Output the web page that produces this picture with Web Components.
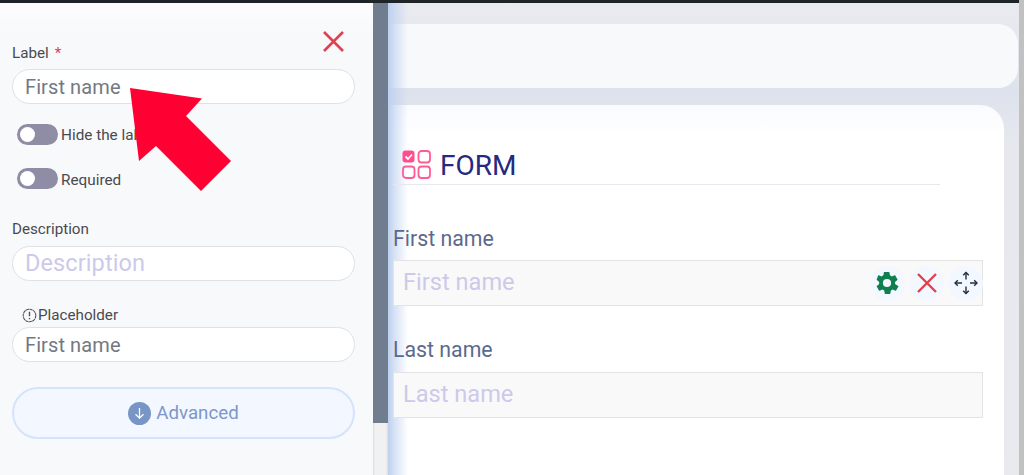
<!DOCTYPE html>
<html>
<head>
<meta charset="utf-8">
<title>Form builder</title>
<style>
html, body { margin: 0; padding: 0; height: 100%; overflow: hidden; }
body { font-family: 'Roboto', 'Liberation Sans', sans-serif; }
</style>
</head>
<body>
<form-app>
  <side-panel slot="panel">
    <pill-input label="Label" required value="First name" tone="value"></pill-input>
    <toggle-row>Hide the label</toggle-row>
    <toggle-row class="second">Required</toggle-row>
    <pill-input label="Description" value="Description" tone="hint" class="description"></pill-input>
    <pill-input label="Placeholder" info value="First name" tone="value" class="placeholder"></pill-input>
    <advanced-button>Advanced</advanced-button>
  </side-panel>
  <form-canvas slot="canvas">
    <form-field label="First name" hint="First name" tools></form-field>
    <form-field label="Last name" hint="Last name" class="last"></form-field>
  </form-canvas>
</form-app>

<script>
class FormApp extends HTMLElement {
    constructor() {
        super();
        this.attachShadow({mode: 'open'});
        this.shadowRoot.innerHTML = `
<style>
:host { display: flex; flex-direction: column; width: 1024px; height: 475px; position: relative; overflow: hidden; }
.topbar { height: 3px; flex: none; background: #1f2428; margin-right: 5px; }
.top-right { position: absolute; top: 0; right: 0; width: 5px; height: 3px; background: #c1c1c1; }
.body { flex: 1; display: flex; min-height: 0; }
.track { width: 15px; flex: none; background: linear-gradient(90deg, #dcdcdc, #f1f1f1 15%, #f1f1f1 85%, #dcdcdc); }
.thumb { height: 420px; background: #6f7d8f; }
.main { flex: 1; min-width: 0; display: flex; }
.page-scroll { width: 5px; flex: none; background: #c1c1c1; }
.arrow { position: absolute; left: 0; top: 0; pointer-events: none; }
</style>
<div class="topbar"></div>
<div class="top-right"></div>
<div class="body">
  <slot name="panel"></slot>
  <div class="track"><div class="thumb"></div></div>
  <div class="main"><slot name="canvas"></slot></div>
  <div class="page-scroll"></div>
</div>
<svg class="arrow" width="240" height="200" viewBox="0 0 240 200"><polygon points="130,88 202,98.500 186,116 231,161 201,191 156,146 139,161" fill="#ff0033"/></svg>`;
    }
}

class SidePanel extends HTMLElement {
    constructor() {
        super();
        this.attachShadow({mode: 'open'});
        this.shadowRoot.innerHTML = `
<style>
:host { display: block; width: 373px; flex: none; box-sizing: border-box; padding: 42px 18px 0 12px; position: relative;
  background: linear-gradient(180deg, #fdfdfe 0, #f8f9fb 26px, #f8f9fb 100%); }
.close { position: absolute; left: 322px; top: 27px; width: 23px; height: 23px; }
</style>
<svg class="close" viewBox="0 0 23 23"><path d="M2 2 L21 21 M21 2 L2 21" stroke="#e0404f" stroke-width="2.600" fill="none"/></svg>
<slot></slot>`;
    }
}

class PillInput extends HTMLElement {
    constructor() {
        super();
        this.attachShadow({mode: 'open'});
        const req = this.hasAttribute('required') ? '<span class="req">*</span>' : '';
        const info = this.hasAttribute('info')
            ? '<svg class="info" width="15" height="15" viewBox="0 0 15 15"><circle cx="7.500" cy="7.500" r="6.300" fill="none" stroke="#555" stroke-width="1.100" stroke-dasharray="3.200 .4"/><path d="M7.500 3.800v4.500M7.500 10v1.200" stroke="#555" stroke-width="1.400" fill="none"/></svg>'
            : '';
        this.shadowRoot.innerHTML = `
<style>
:host { display: block; }
:host(.description) { margin-top: 32px; }
:host(.placeholder) { margin-top: 26px; }
.label { display: flex; align-items: center; height: 16px; font-size: 15.200px; color: #4a4a4f; margin-bottom: 8px; white-space: pre; }
:host(.description) .label { margin-bottom: 9px; }
:host(.placeholder) .label { padding-left: 10px; margin-bottom: 4px; }
.req { color: #e0404f; margin-left: 6px; }
.info { margin-right: 1px; }
.box { box-sizing: border-box; height: 35px; border: 1px solid #e0e0e8; border-radius: 18px; background: #fff;
  padding: 0 12px; font-size: 20px; line-height: 35px; letter-spacing: .1px; white-space: nowrap; }
:host([tone="value"]) .box { color: #727982; }
:host([tone="hint"]) .box { color: #cdc9ea; font-size: 23.500px; line-height: 33px; }
</style>
<div class="label">${info}<span>${this.getAttribute('label')}${req}</span></div>
<div class="box">${this.getAttribute('value')}</div>`;
    }
}

class ToggleRow extends HTMLElement {
    constructor() {
        super();
        this.attachShadow({mode: 'open'});
        this.shadowRoot.innerHTML = `
<style>
:host { display: flex; align-items: center; gap: 3px; height: 21px; margin: 20px 0 0 5px; font-size: 15.300px; color: #4a4a4f; }
:host(.second) { margin-top: 23px; }
:host(.second) span { padding-top: 2px; }
.track { width: 41px; height: 21px; border-radius: 11px; background: #8f8ca6; box-sizing: border-box; padding: 3px; }
.knob { width: 15px; height: 15px; border-radius: 50%; background: #fff; }
</style>
<div class="track"><div class="knob"></div></div>
<span><slot></slot></span>`;
    }
}

class AdvancedButton extends HTMLElement {
    constructor() {
        super();
        this.attachShadow({mode: 'open'});
        this.shadowRoot.innerHTML = `
<style>
:host { display: flex; align-items: center; justify-content: center; gap: 5px; box-sizing: border-box; height: 52px; margin-top: 25px;
  border: 2px solid #d5e3fc; border-radius: 26px; background: #f3f7ff; font-size: 18.700px; color: #7b98c8; }
</style>
<svg width="23" height="23" viewBox="0 0 23 23"><circle cx="11.500" cy="11.500" r="11.500" fill="#7795c5"/><path d="M11.500 6v10M7.500 12.200l4 4 4-4" stroke="#fff" stroke-width="1.300" fill="none"/></svg>
<span><slot></slot></span>`;
    }
}

class FormCanvas extends HTMLElement {
    constructor() {
        super();
        this.attachShadow({mode: 'open'});
        this.shadowRoot.innerHTML = `
<style>
:host { display: block; flex: 1; min-width: 0; box-sizing: border-box; height: 100%; position: relative; overflow: hidden; padding-top: 21px;
  background: linear-gradient(180deg, #e9ebef 0, #e7e9ef 20px, #dee2ec 90px, #e6e8ee 140px, #e8eaee 100%); }
:host::after { content: ''; position: absolute; left: 0; top: 0; bottom: 0; width: 20px;
  background: linear-gradient(90deg, #bdd0ef, rgba(189, 208, 239, .55) 40%, rgba(189, 208, 239, 0)); }
.bar { height: 64px; margin: 0 1px 17px -24px; border-radius: 20px; background: #f8f9fb; }
.card { height: 420px; margin: 0 15px 0 -24px; padding: 45px 21px 0 29px; border-radius: 24px 24px 0 0; background: linear-gradient(180deg, #fafbfe 0, #fff 30px); }
.inner { position: relative; z-index: 1; }
.head { display: flex; align-items: center; height: 31px; padding-left: 9px; margin-right: 43px; padding-bottom: 3px; border-bottom: 1px solid #e6e8ee; gap: 9px; font-size: 28px; color: #27297f; }
.head svg { margin-top: -2px; }
</style>
<div class="bar"></div>
<div class="card">
  <div class="inner">
    <div class="head">
      <svg width="29" height="29" viewBox="0 0 29 29">
        <rect x=".5" y=".5" width="12" height="12" rx="3" fill="#ff4d8d"/>
        <path d="M3.500 6.500l2.500 2.500 4-4.500" stroke="#fff" stroke-width="1.800" fill="none"/>
        <g fill="none" stroke="#ff5c95" stroke-width="1.800"><rect x="16.500" y="1" width="11.500" height="11.500" rx="3"/><rect x="1" y="16.500" width="11.500" height="11.500" rx="3"/><rect x="16.500" y="16.500" width="11.500" height="11.500" rx="3"/></g>
      </svg>
      <span>FORM</span>
    </div>
    <slot></slot>
  </div>
</div>`;
    }
}

class FormField extends HTMLElement {
    constructor() {
        super();
        this.attachShadow({mode: 'open'});
        const tools = this.hasAttribute('tools') ? `
<div class="tools">
  <span class="tool"><svg width="26" height="26" viewBox="0 0 24 24"><path fill="#0f7f4f" fill-rule="evenodd" d="M19.400 13c.1-.3.1-.7.100-1s0-.7-.1-1l2.200-1.700c.2-.2.200-.4.100-.6l-2.100-3.600c-.1-.2-.4-.3-.6-.2l-2.600 1c-.5-.4-1.100-.7-1.700-1l-.4-2.700c0-.2-.2-.4-.5-.4h-4.200c-.3 0-.5.200-.5.400l-.4 2.700c-.6.3-1.200.6-1.700 1l-2.600-1c-.2-.1-.5 0-.6.200L2.500 8.700c-.1.200-.1.400.1.600L4.800 11c-.1.300-.1.700-.1 1s0 .7.100 1l-2.200 1.700c-.2.200-.2.400-.1.600l2.100 3.600c.1.200.4.300.6.200l2.600-1c.5.400 1.100.7 1.700 1l.4 2.700c0 .2.200.4.500.4h4.200c.3 0 .5-.2.500-.4l.4-2.700c.6-.3 1.200-.6 1.700-1l2.600 1c.2.1.5 0 .6-.2l2.100-3.600c.1-.2.1-.4-.1-.6L19.400 13zM12 15.800a3.800 3.800 0 1 1 0-7.600 3.800 3.800 0 0 1 0 7.600z"/></svg></span>
  <span class="tool"><svg width="22" height="22" viewBox="0 0 22 22"><path d="M2 2 L20 20 M20 2 L2 20" stroke="#e0404f" stroke-width="2.400" fill="none"/></svg></span>
  <span class="tool"><svg width="24" height="24" viewBox="0 0 24 24"><path d="M12 1.500v7M12 15.500v7M1 12h7M16 12h7" stroke="#242d3c" stroke-width="1.400" fill="none"/><path d="M9.200 4.300 12 1.500l2.800 2.800M9.200 19.700 12 22.500l2.800-2.800M3.800 9.200 1 12l2.800 2.800M20.200 9.200 23 12l-2.800 2.800" stroke="#242d3c" stroke-width="1.400" fill="none"/></svg></span>
</div>` : '';
        this.shadowRoot.innerHTML = `
<style>
:host { display: block; margin-top: 43px; }
:host(.last) { margin-top: 33px; }
.label { font-size: 21.300px; line-height: 21px; color: #5b6a8c; margin-bottom: 11px; }
:host(.last) .label { margin-bottom: 12px; }
.box { display: flex; align-items: center; justify-content: space-between; box-sizing: border-box; height: 46px; border: 1px solid #e3e3e3; background: #f9f9f9;
  padding: 0 0 0 9px; font-size: 23.600px; color: #cdc9ea; white-space: nowrap; }
.box > span:first-child { margin-top: -2px; }
.tools { display: flex; gap: 4px; margin-right: -1px; }
.tool { display: flex; align-items: center; justify-content: center; width: 35px; height: 35px; border-radius: 50%; background: #f3f7ff; }
.tool:first-child svg { margin-left: -2px; }
</style>
<div class="label">${this.getAttribute('label')}</div>
<div class="box"><span>${this.getAttribute('hint')}</span>${tools}</div>`;
    }
}

customElements.define('form-app', FormApp);
customElements.define('side-panel', SidePanel);
customElements.define('pill-input', PillInput);
customElements.define('toggle-row', ToggleRow);
customElements.define('advanced-button', AdvancedButton);
customElements.define('form-canvas', FormCanvas);
customElements.define('form-field', FormField);
</script>
</body>
</html>
